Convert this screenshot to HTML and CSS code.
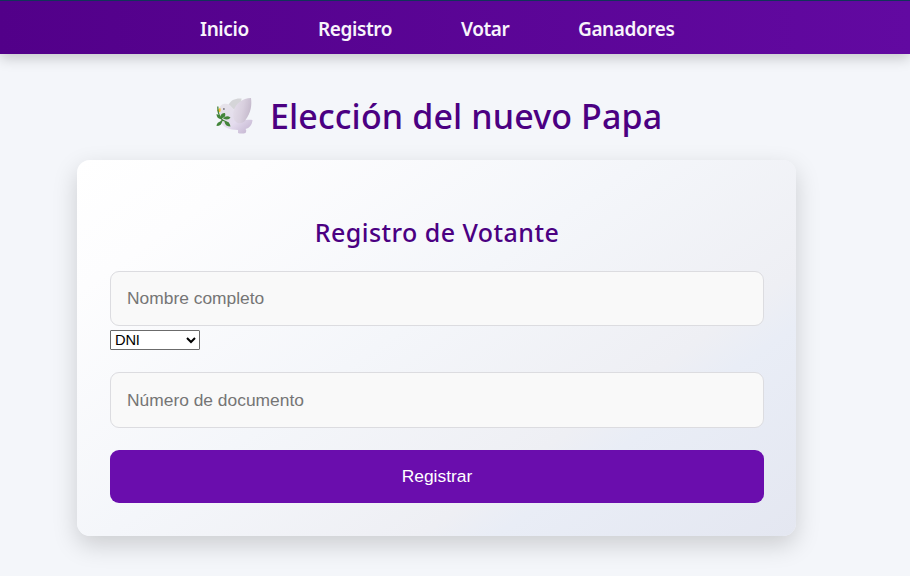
FILE: index.html
```
<!DOCTYPE html>
<html lang="es">
<head>
<meta charset="utf-8">
<title>Elección del nuevo Papa</title>
<link rel="stylesheet" href="styles.css">
</head>
<body>
<nav class="navbar">
  <a class="inicio">Inicio</a><a class="registro">Registro</a><a class="votar">Votar</a><a class="ganadores">Ganadores</a>
</nav>
<main class="container">
  <h1 class="title">
    <svg class="dove" viewBox="0 0 36 36" aria-hidden="true">
      <defs>
        <linearGradient id="wing" x1="0" y1="0" x2="1" y2="0.3"><stop offset="0" stop-color="#e6e0ec"/><stop offset=".6" stop-color="#d8cfde"/><stop offset="1" stop-color="#c6bbcd"/></linearGradient>
        <linearGradient id="body" x1="0" y1="0" x2="1" y2="1"><stop offset="0" stop-color="#e6e4e9"/><stop offset=".55" stop-color="#e4dcee"/><stop offset="1" stop-color="#c0b0cd"/></linearGradient>
      </defs>
      <path d="M12 7C14 2 19 0 25 0.500C25 5 22 9 18 12Z" fill="#d5d5d8"/>
      <path d="M2.500 11C3 7.500 6 5.500 9.500 5.700C13 6 15 8.500 17 11C21 16 26 21 29 22C32 21.500 34 21.500 36 22C35.500 27 33 30 29 31C30 32 30 33 29 35C26 36 23 35.500 21.500 35L21.500 32C13 32 5 29 3.500 22C3 18 4 15 2.500 11Z" fill="url(#body)"/>
      <path d="M17 13C19 6 26 0 34.500 0C35.500 7 34.500 15 29 22C28 24 25 26 21 25C17 23 16 18 17 13Z" fill="url(#wing)"/>
      <path d="M3.700 9.800L.5 12.500L3.500 14.500Q5 12 3.700 9.800Z" fill="#f5bd32"/>
      <circle cx="7.400" cy="11" r=".8" fill="#35333a"/>
      <path d="M1.300 8.500Q1 17 6 22L12 25M6 22L3 26" fill="none" stroke="#438338" stroke-width="1.300"/>
      <path d="M0 16Q4 17 5 21Q0 21 0 16ZM4 19Q4 15 8.500 15Q10 19 5 20.500ZM6.500 20.500Q10 16.500 14 19.500Q12 23 6.500 20.500ZM0 28Q0 24 5.500 23Q5.500 28 0 28ZM8 24Q13 22.500 14 28.500Q9 28.500 8 24Z" fill="#43853a"/>
    </svg>
    <span>Elección del nuevo Papa</span>
  </h1>
  <form class="card">
    <h2 class="subtitle">Registro de Votante</h2>
    <input class="field" type="text" placeholder="Nombre completo">
    <select class="doctype"><option>DNI</option></select>
    <input class="field document" type="text" placeholder="Número de documento">
    <button class="submit" type="button">Registrar</button>
  </form>
</main>
</body>
</html>
```
FILE: styles.css
```
* { box-sizing: border-box; }
body {
  margin: 0;
  height: 576px;
  overflow: hidden;
  background: #f4f6fa;
  font-family: "Noto Sans", "Open Sans", sans-serif;
  color: #4b0082;
}
.navbar {
  display: flex;
  justify-content: center;
  gap: 70px;
  height: 54px;
  padding: 6px 36px 0 0;
  border-top: 1px solid #123359;
  background: linear-gradient(90deg, #520089, #6209a1);
  box-shadow: 0 4px 13px rgba(0, 0, 0, .2);
  color: #f8f4fb;
  font-size: 19px;
  font-weight: 600;
  line-height: 44px;
  letter-spacing: -.4px;
}
.navbar a { white-space: nowrap; }
.inicio { width: 48px; }
.registro { width: 73px; }
.votar { width: 47px; }
.ganadores { width: 96px; }
.container { width: 719px; margin-left: 77px; }
.title {
  display: flex;
  align-items: center;
  height: 106px;
  margin: 0;
  padding: 17px 0 0 139px;
  gap: 17px;
  font-size: 34px;
  font-weight: 500;
  letter-spacing: .12px;
  white-space: nowrap;
}
.dove { width: 37px; height: 36px; flex: none; }
.card {
  display: flex;
  flex-direction: column;
  height: 376px;
  padding: 51px 32px 33px 33px;
  border-radius: 13px;
  background: linear-gradient(145deg, #fff 0%, #fdfdfe 15%, #f4f6fa 45%, #eeeff4 70%, #e9edf6 76%, #e4e7f1 100%);
  box-shadow: 0 9px 24px rgba(0, 0, 0, .17);
}
.subtitle {
  height: 60px;
  margin: 0;
  font-size: 25px;
  font-weight: 500;
  line-height: 43px;
  letter-spacing: .45px;
  text-align: center;
  white-space: nowrap;
}
.field {
  width: 100%;
  height: 55px;
  padding: 0 16px;
  border: 1px solid #dcdce0;
  border-radius: 9px;
  background: #f9f9f9;
  font: 17.4px "Liberation Sans", sans-serif;
}
.document { height: 56px; }
.field::placeholder { color: #757575; }
.doctype {
  width: 90px;
  height: 20px;
  margin: 4px 0 22px;
  padding: 0;
  border: 1px solid #6b6b6b;
  border-radius: 1px;
  background: #fff;
  color: #000;
  font: 14.67px "Liberation Sans", sans-serif;
  letter-spacing: -.2px;
}
.submit {
  height: 53px;
  margin-top: 22px;
  border: 0;
  border-radius: 9px;
  background: #6a0dad;
  color: #fff;
  font: 17.4px "Liberation Sans", sans-serif;
}
```
